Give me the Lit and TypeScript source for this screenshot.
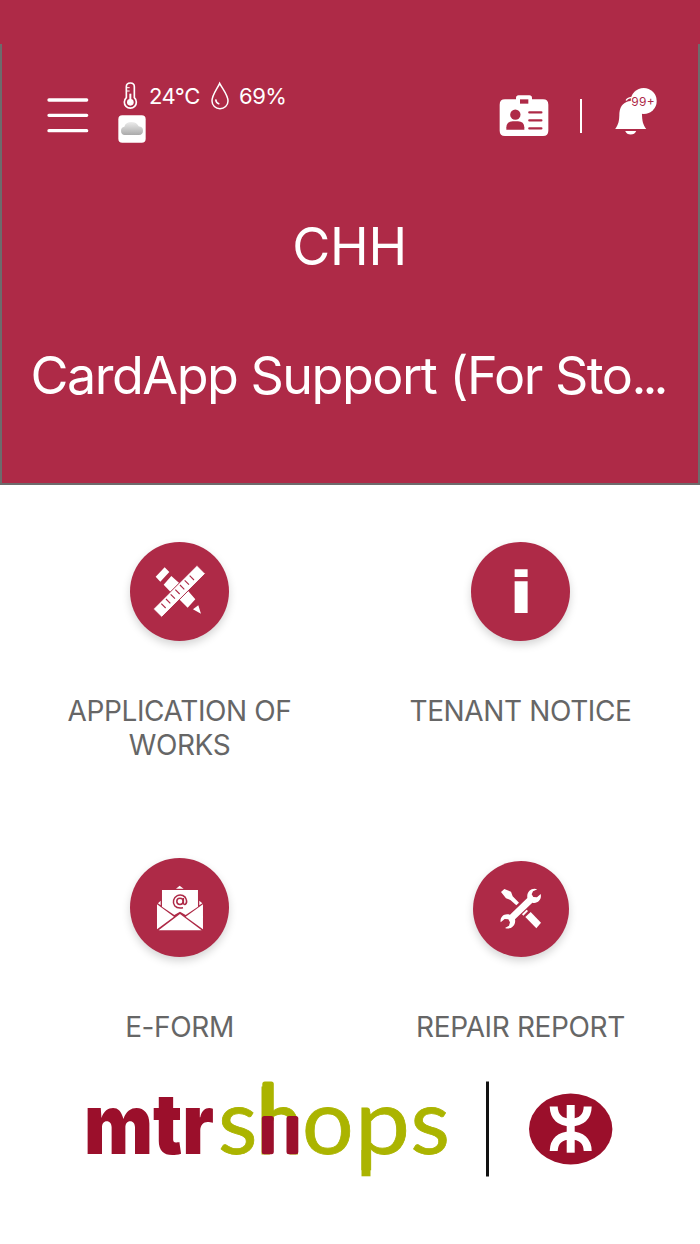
import { LitElement, html, css, svg } from "lit";
import { customElement, property } from "lit/decorators.js";

const worksIcon = svg`<svg viewBox="30 34 298 298" width="99.3" height="99.3" fill="#fff">
  <path d="M107 138 134 110 148 124 121 153ZM131 162 154 136 181 160 154 186ZM177 205 204 180 226 206 203 231ZM219 236 235 224 243 249Z"/>
  <path d="M231 104 256 129 125 260 100 235Z" stroke="#ae2a47" stroke-width="3"/>
  <path d="M124 219l13 13M138 205l13 13M152 191l13 13M166 177l13 13M180 163l13 13M194 149l13 13M209 135l13 13" stroke="#ae2a47" stroke-width="3.5"/>
</svg>`;

const noticeIcon = svg`<svg viewBox="34 35 296 296" width="98.6" height="98.6" fill="#fff">
  <path d="M165 117H204V140H165ZM165 153H204V248H165Z"/>
</svg>`;

const formIcon = svg`<svg viewBox="30 22 298 298" width="99.3" height="99.3">
  <g fill="#fff">
    <path d="M168 114 179 105 191 114ZM114 158 122 150V164ZM247 158 238 150V164Z"/>
    <path d="M126 118H234V168L197 193 180 183 163 193 126 168Z"/>
    <path d="M111 161 162 198 111 236ZM249 161 197 198 249 236ZM116 239 180 190 245 239Z"/>
  </g>
  <g fill="none" stroke="#ae2a47" stroke-width="4.6">
    <circle cx="180" cy="152" r="9.5"/>
    <path d="M190 142V156Q191 163 196 161Q202 157 199 147C196 135 183 130 172 135C160 141 157 155 164 165C171 173 180 173 189 171"/>
  </g>
</svg>`;

const repairIcon = svg`<svg viewBox="39 35 288 288" width="96" height="96">
  <path d="M123 128 133 119 153 127 158 141 177 160 169 168 151 152 138 147Z" fill="#fff"/>
  <path d="M188 197 202 183" stroke="#fff" stroke-width="6"/>
  <path d="M196 203 212 188 243 220 229 237Z" fill="#fff"/>
  <path d="M232 120C218 113 199 124 202 146L150 196C132 190 119 203 122 219L134 209 145 210 150 219 147 229 135 236C151 243 169 229 165 210L217 160C234 164 246 150 242 134L231 144 220 143 215 135 219 126Z" fill="#fff"/>
</svg>`;

@customElement("service-tile")
class ServiceTile extends LitElement {
  @property() label = "";
  @property({ attribute: false }) icon: unknown = null;

  static styles = css`
    :host { display: flex; flex-direction: column; align-items: center; }
    .slot { height: 99.3px; display: flex; align-items: flex-end; }
    .disc { border-radius: 50%; background: #ae2a47; display: flex; box-shadow: 0 4px 8px rgba(0, 0, 0, 0.17); }
    .disc svg { display: block; }
    .label { margin-top: 53px; width: 290px; text-align: center; font-size: 28px; line-height: 34px; color: #666; letter-spacing: -0.37px; }
  `;

  render() {
    return html`<div class="slot"><div class="disc">${this.icon}</div></div>
      <div class="label">${this.label}</div>`;
  }
}

@customElement("app-root")
class AppRoot extends LitElement {
  static styles = css`
    :host { display: block; height: 1244px; overflow: hidden; background: #fff; font-family: Inter, "Liberation Sans", sans-serif; }
    * { box-sizing: border-box; }
    svg { display: block; }
    .status { height: 44px; background: #ae2a47; }
    .hero { height: 441px; background: #ae2a47; border: 2px solid #6d6b6c; border-top: 0; color: #fff; display: flex; flex-direction: column; }
    .bar { height: 120px; display: flex; align-items: flex-start; padding-left: 45px; }
    .menu { margin-top: 53px; width: 42px; }
    .weather { margin: 37px 0 0 29px; width: 381px; }
    .reading { height: 30px; display: flex; align-items: center; padding-left: 2px; font-size: 22px; letter-spacing: -0.5px; line-height: 28px; white-space: nowrap; }
    .temp { margin: -1px 0 0 9px; width: 61px; }
    .hum { margin: -1px 0 0 9px; }
    .sky { margin-top: 4px; }
    .card { margin-top: 51px; width: 50px; }
    .rule { margin: 55px 0 0 31px; width: 2px; height: 34px; background: #fff; }
    .bell { margin: 43px 0 0 32px; }
    .bell text { font: 12px Inter, sans-serif; }
    .title { text-align: center; font-size: 52px; line-height: 64px; white-space: nowrap; }
    .code { margin-top: 51px; letter-spacing: -0.2px; padding-right: 1px; }
    .name { margin-top: 65px; letter-spacing: -1.5px; padding-right: 5px; }
    .dots { letter-spacing: -4px; }
    .tiles { margin-top: 56.5px; padding: 0 9px; height: 508.5px; display: grid; grid-template-columns: 1fr 1fr; grid-template-rows: 316px 192px; }
    .mtr { font: 900 84px Inter, sans-serif; }
    .shops { font: 91px Lato, sans-serif; stroke: #abb400; stroke-width: 0.8px; }
  `;

  render() {
    return html`
      <div class="status"></div>
      <header class="hero">
        <div class="bar">
          <svg class="menu" width="42" height="38" viewBox="141 201 126 114" stroke="#fff" stroke-width="10" stroke-linecap="round">
            <path d="M147 210H260M147 256H260M147 302H260"/>
          </svg>
          <div class="weather">
            <div class="reading">
              <svg width="20" height="30" viewBox="360 152 60 90" fill="none" stroke="#fff" stroke-width="5">
                <path d="M379 202V169Q379 158 391 158Q403 158 403 169V202A18 18 0 1 1 379 202Z"/>
                <path d="M381 172H389M381 182H389" stroke-width="3"/>
                <path d="M391 190V214" stroke-width="6"/>
                <circle cx="391" cy="216" r="10" fill="#fff" stroke="none"/>
              </svg>
              <span class="temp">24°C</span>
              <svg width="20" height="30" viewBox="630 152 60 90" fill="none" stroke="#fff" stroke-width="4.5">
                <path d="M659 159C652 175 636 194 636 212A24 23 0 0 0 684 212C684 194 667 175 659 159Z"/>
                <path d="M647 207Q648 218 658 221"/>
              </svg>
              <span class="hum">69%</span>
            </div>
            <svg class="sky" width="28" height="28" viewBox="354 255 84 84">
              <defs><linearGradient id="g" x2="0" y2="1"><stop stop-color="#ececec"/><stop offset="1" stop-color="#aaa"/></linearGradient></defs>
              <rect x="355" y="256" width="82" height="82" rx="12" fill="#fff"/>
              <path d="M374 315Q363 314 363 302Q363 292 373 290Q377 276 394 276Q410 276 416 289Q429 290 429 302Q429 314 417 315Z" fill="url(#g)"/>
            </svg>
          </div>
          <svg class="card" width="50" height="42" viewBox="56 74 150 126">
            <path d="M74 87H107V83Q107 75 115 75H147Q155 75 155 83V87H188Q204 87 204 103V181Q204 197 188 197H74Q58 197 58 181V103Q58 87 74 87Z" fill="#fff"/>
            <g fill="#ae2a47"><path d="M119 87H144V100H119Z"/><circle cx="105" cy="133" r="15.5"/>
            <path d="M78 178V171Q79 153 97 153H113Q131 153 132 171V178Z"/></g>
            <path d="M147 126H183M147 150H183M147 174H183" stroke="#ae2a47" stroke-width="7" stroke-linecap="round"/>
          </svg>
          <div class="rule"></div>
          <svg class="bell" width="45" height="50" viewBox="615.3 87 45 50">
            <path d="M616.500 129C620 124 620.500 121 620.700 113C621.500 105 626 101.500 632 101H643.200V113C643.500 121 644 124 647.500 129Z" fill="#fff"/>
            <path d="M626.500 131H637.500Q636 134.500 632 134.500Q628 134.500 626.500 131Z" fill="#fff"/>
            <circle cx="645" cy="101" r="13" fill="#fff"/>
            <path d="M627.500 100.500Q628.500 98 633 97.500" stroke="#fff" stroke-width="1.500" fill="none"/>
            <text x="632.500" y="105.500" fill="#ae2a47" textLength="23.500" lengthAdjust="spacing">99+</text>
          </svg>
        </div>
        <div class="title code">CHH</div>
        <div class="title name">CardApp Support (For Sto<span class="dots">...</span></div>
      </header>
      <main class="tiles">
        <service-tile .icon=${worksIcon} label="APPLICATION OF WORKS"></service-tile>
        <service-tile .icon=${noticeIcon} label="TENANT NOTICE"></service-tile>
        <service-tile .icon=${formIcon} label="E-FORM"></service-tile>
        <service-tile .icon=${repairIcon} label="REPAIR REPORT"></service-tile>
      </main>
      <svg class="brand" width="700" height="150" viewBox="0 1050 700 150">
        <text class="mtr" x="84" y="1153.500" fill="#9b0f2b" textLength="130" lengthAdjust="spacingAndGlyphs">mtr</text>
        <text class="shops" y="1153.500" fill="#abb400"><tspan x="218">s</tspan><tspan x="256" textLength="47" lengthAdjust="spacingAndGlyphs">h</tspan><tspan x="302">o</tspan><tspan x="355" textLength="55" lengthAdjust="spacingAndGlyphs">p</tspan><tspan x="410.500">s</tspan></text>
        <path d="M361.500 1150H370.500V1176.300H361.500Z" fill="#abb400"/>
        <rect x="262.300" y="1081.500" width="11.500" height="40" rx="2.500" fill="#abb400"/>
        <rect x="261.800" y="1116" width="12" height="38.300" rx="2.500" fill="#9b0f2b"/>
        <rect x="286.500" y="1116" width="11.800" height="38.300" rx="2.500" fill="#9b0f2b"/>
        <path d="M486 1081.500H489V1176.500H486Z" fill="#111"/>
        <ellipse cx="570.700" cy="1129" rx="41.700" ry="35.500" fill="#9b0f2b"/>
        <g fill="none" stroke="#fff" stroke-width="8">
          <path d="M570.700 1105V1152.700"/>
          <path d="M553.700 1106.500C554 1117 560 1122.500 570.700 1122.500S587.500 1117 587.700 1106.500M553.700 1151C554 1141 560 1135.500 570.700 1135.500S587.500 1141 587.700 1151"/>
        </g>
      </svg>
    `;
  }
}
